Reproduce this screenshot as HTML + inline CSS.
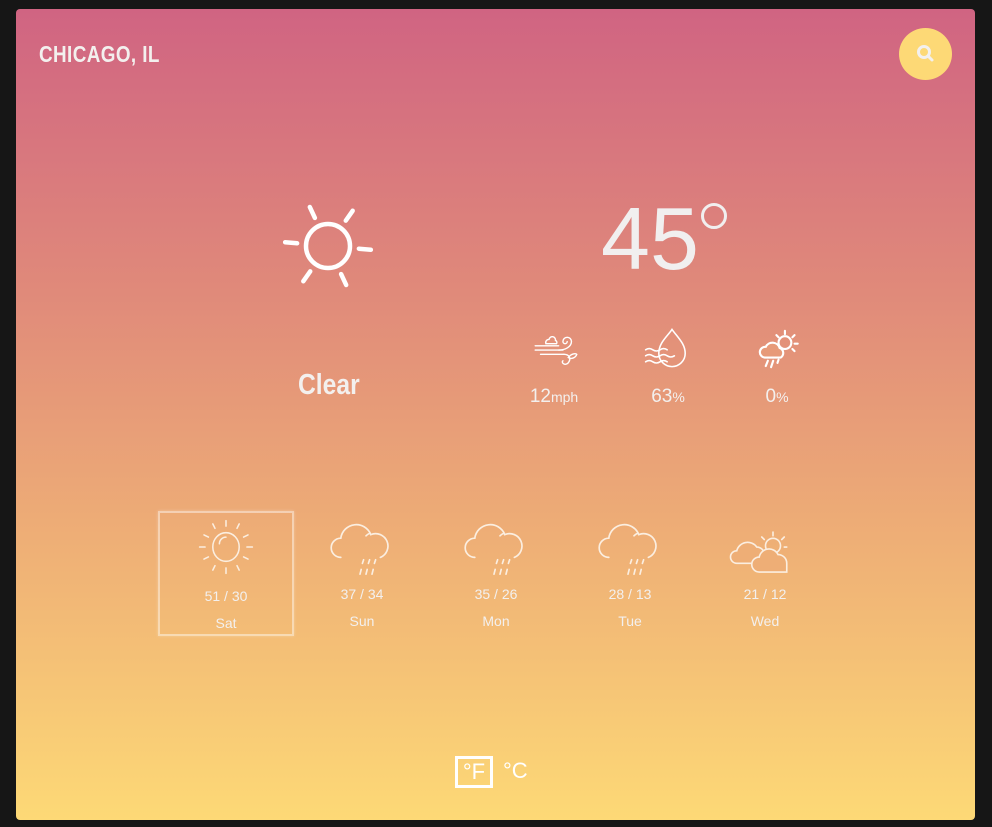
<!DOCTYPE html>
<html><head><meta charset="utf-8"><style>
*{margin:0;padding:0;box-sizing:border-box}
body{width:992px;height:827px;background:#161616;position:relative;overflow:hidden;font-family:"Liberation Sans",sans-serif;color:#f3f0ee}
.card{position:absolute;left:16px;top:9px;width:959px;height:811px;border-radius:4px;background:linear-gradient(to bottom,#d06482 0%,#e08a7a 35%,#eeae76 65%,#fdd976 100%);overflow:hidden}
.a{position:absolute}
.city{left:23px;top:32px;font-size:23px;font-weight:bold;letter-spacing:0.5px;transform:scaleX(0.82);transform-origin:left}
.search{left:883px;top:19px;width:53px;height:52px;border-radius:50%;background:#fdd976}
.temp{left:585px;top:186px;font-size:88px;line-height:1;color:#f1efef}
.deg{left:685px;top:194px;width:26px;height:26px;border:3.5px solid #f1efef;border-radius:50%}
.clear{left:282px;top:360px;font-size:29px;font-weight:bold;transform:scaleX(0.85);transform-origin:left}
.val{font-size:19px;text-align:center;width:100px}
.val small{font-size:14px}
.f{width:136px;text-align:center;top:502px}
.f .t{position:absolute;top:75px;width:100%;font-size:14px}
.f .d{position:absolute;top:102px;width:100%;font-size:14px}
.sel{border:2px solid rgba(255,255,255,0.45);box-shadow:0 0 3px rgba(255,255,255,.3);height:125px}
</style></head><body>
<div class="card">
<div class="a city">CHICAGO, IL</div>
<div class="a search"><svg width="53" height="52"><circle cx="25" cy="24" r="5.5" fill="none" stroke="#f3f0ee" stroke-width="3"/><line x1="29" y1="28" x2="33" y2="32" stroke="#f3f0ee" stroke-width="3" stroke-linecap="round"/></svg></div>

<svg class="a" style="left:254px;top:178px" width="120" height="110"><g transform="translate(58,59)" stroke="#fff" stroke-width="4.5" stroke-linecap="round" fill="none"><circle r="22"/>
<g transform="rotate(5)"><line x1="31" x2="43"/></g><g transform="rotate(65)"><line x1="31" x2="43"/></g><g transform="rotate(125)"><line x1="31" x2="43"/></g><g transform="rotate(185)"><line x1="31" x2="43"/></g><g transform="rotate(245)"><line x1="31" x2="43"/></g><g transform="rotate(305)"><line x1="31" x2="43"/></g></g></svg>

<div class="a temp">45</div>
<div class="a deg"></div>
<div class="a clear">Clear</div>

<svg class="a" style="left:516px;top:318px" width="48" height="44" viewBox="0 0 45 40" fill="none" stroke="#fff" stroke-width="1.3" stroke-linecap="round"><path d="M3 17h22M3 21h26M8 25h22"/><path d="M23 15h-10a3 3 0 0 1 3-4a3 3 0 0 1 6 1a2 2 0 0 1 1 3z"/><path d="M25 21c6 0 12-3 12-8a4 4 0 0 0-8 0a2 2 0 0 0 4 0"/><path d="M30 25c5 0 7 4 4 8c-3 3-7 0-5-2"/><path d="M34 28c3-4 7-4 8-3c-1 3-5 5-8 3z"/></svg>
<svg class="a" style="left:626px;top:318px" width="48" height="48" viewBox="0 0 40 40" fill="none" stroke="#fff" stroke-width="1.3" stroke-linecap="round"><path d="M25 2c-4 6-11 11-11 20a11 11 0 0 0 22 0c0-8-6-13-11-20z"/><path d="M3 19q3-2 6 0t6 0t6 0M3 24q3-2 6 0t6 0t6 0t6 0M3 29q3-2 6 0t6 0t6 0"/></svg>
<svg class="a" style="left:738px;top:318px" width="48" height="44" viewBox="0 0 45 40" fill="none" stroke="#fff" stroke-width="2" stroke-linecap="round"><circle cx="29" cy="14" r="6"/><path d="M29 3v3M38 7l-2 2M41 15h-3M38 22l-2-2M21 7l2 2"/><path d="M10 28a5 5 0 0 1 1-10a7 7 0 0 1 13 1a5 5 0 0 1 1 9z" fill="#e79a79"/><path d="M13 31l-2 5M18 31l-2 6M23 30l-1 3"/></svg>

<div class="a val" style="left:488px;top:377px">12<small>mph</small></div>
<div class="a val" style="left:602px;top:377px">63<small>%</small></div>
<div class="a val" style="left:711px;top:377px">0<small>%</small></div>

<div class="a f sel" style="left:142px"><svg width="136" height="70" style="position:absolute;left:-2px;top:4px"><g transform="translate(68,30) scale(1.1)" stroke="#fbeee0" stroke-width="1.4" stroke-linecap="round" fill="none"><ellipse rx="12" ry="13"/><path d="M-6 -3a6 6 0 0 1 6-6"/><path d="M0-24v5M0 19v5M-24 0h5M19 0h5M-12-21l2 4M12-21l-2 4M-12 21l2-4M12 21l-2-4M-20-11l4 2M20-11l-4 2M-20 11l4-2M20 11l-4-2"/></g></svg><div class="t">51 / 30</div><div class="d">Sat</div></div>

<div class="a f" style="left:278px"><svg width="136" height="70" style="position:absolute;left:0;top:3px"><g transform="translate(66,35) scale(1.2) translate(-66,-35)" stroke="#fbeee0" stroke-width="1.4" stroke-linecap="round" fill="none"><path d="M50 42a8 8 0 0 1 0-16a13 13 0 0 1 25-3a9 9 0 0 1 8 19"/><path d="M71 24a9 9 0 0 1 3-2"/><path d="M74 44l-1 3M79 44l-1 3M69 44l-1 3M67 52l-1 4M72 52l-1 4M77 52l-1 4"/></g></svg><div class="t">37 / 34</div><div class="d">Sun</div></div>
<div class="a f" style="left:412px"><svg width="136" height="70" style="position:absolute;left:0;top:3px"><g transform="translate(66,35) scale(1.2) translate(-66,-35)" stroke="#fbeee0" stroke-width="1.4" stroke-linecap="round" fill="none"><path d="M50 42a8 8 0 0 1 0-16a13 13 0 0 1 25-3a9 9 0 0 1 8 19"/><path d="M71 24a9 9 0 0 1 3-2"/><path d="M74 44l-1 3M79 44l-1 3M69 44l-1 3M67 52l-1 4M72 52l-1 4M77 52l-1 4"/></g></svg><div class="t">35 / 26</div><div class="d">Mon</div></div>
<div class="a f" style="left:546px"><svg width="136" height="70" style="position:absolute;left:0;top:3px"><g transform="translate(66,35) scale(1.2) translate(-66,-35)" stroke="#fbeee0" stroke-width="1.4" stroke-linecap="round" fill="none"><path d="M50 42a8 8 0 0 1 0-16a13 13 0 0 1 25-3a9 9 0 0 1 8 19"/><path d="M71 24a9 9 0 0 1 3-2"/><path d="M74 44l-1 3M79 44l-1 3M69 44l-1 3M67 52l-1 4M72 52l-1 4M77 52l-1 4"/></g></svg><div class="t">28 / 13</div><div class="d">Tue</div></div>
<div class="a f" style="left:681px"><svg width="136" height="70" style="position:absolute;left:0;top:6px"><g transform="translate(66,35) scale(1.25) translate(-66,-35)" stroke="#fbeee0" stroke-width="1.3" stroke-linecap="round" fill="none"><circle cx="74" cy="30" r="6"/><path d="M74 19v3M83 23l-2 2M65 23l2 2M85 31h-2"/><path d="M45 44a5 5 0 0 1 0-10a9 9 0 0 1 16-3a6 6 0 0 1 6 6v7z" fill="#eeae76"/><path d="M63 51a6 6 0 0 1 0-12a8 8 0 0 1 15-2a7 7 0 0 1 7 7v7z" fill="#eeae76"/></g></svg><div class="t">21 / 12</div><div class="d">Wed</div></div>

<div class="a" style="left:439px;top:747px;width:38px;height:32px;border:3px solid #fff;font-size:22px;text-align:center;line-height:26px;color:#fff">°F</div>
<div class="a" style="left:487px;top:748px;font-size:22px;color:#fff;line-height:28px">°C</div>
</div>
</body></html>
